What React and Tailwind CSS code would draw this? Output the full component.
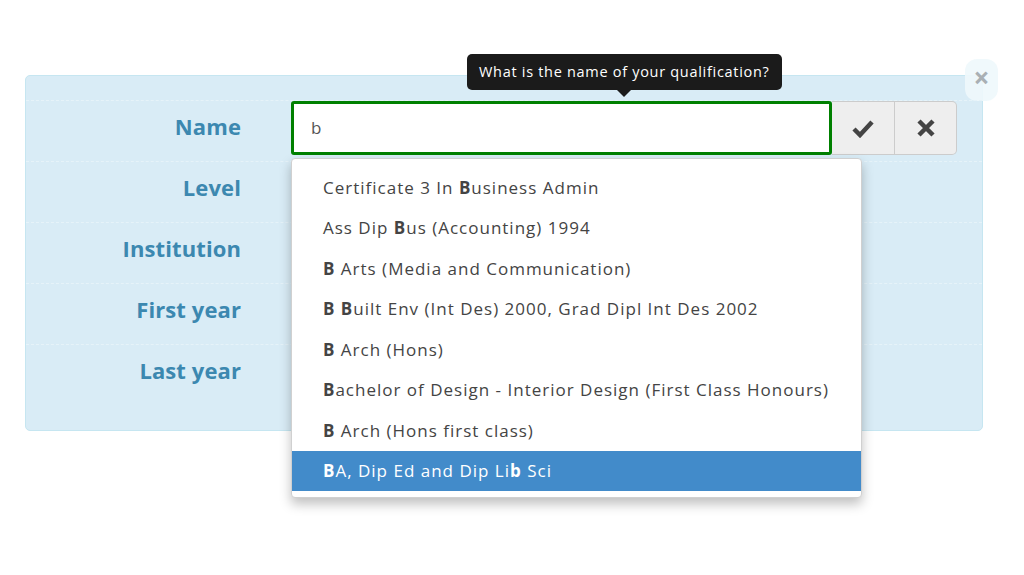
const font = { fontFamily: '"Open Sans", "Liberation Sans", sans-serif' };

const rows = ["Name", "Level", "Institution", "First year", "Last year"];

const options = [
  [["Certificate 3 In ", false], ["B", true], ["usiness Admin", false]],
  [["Ass Dip ", false], ["B", true], ["us (Accounting) 1994", false]],
  [["B", true], [" Arts (Media and Communication)", false]],
  [["B", true], [" ", false], ["B", true], ["uilt Env (Int Des) 2000, Grad Dipl Int Des 2002", false]],
  [["B", true], [" Arch (Hons)", false]],
  [["B", true], ["achelor of Design - Interior Design (First Class Honours)", false]],
  [["B", true], [" Arch (Hons first class)", false]],
  [["B", true], ["A, Dip Ed and Dip Li", false], ["b", true], [" Sci", false]],
];

function CheckIcon() {
  return (
    <svg width="24" height="20" viewBox="0 0 24 20">
      <path d="M3 11 L9 17 L21 4" fill="none" stroke="#444" strokeWidth="4.5" strokeLinejoin="miter" />
    </svg>
  );
}

function TimesIcon() {
  return (
    <svg width="20" height="20" viewBox="0 0 20 20">
      <path d="M3 3 L17 17 M17 3 L3 17" fill="none" stroke="#444" strokeWidth="4.5" />
    </svg>
  );
}

export default function App() {
  return (
    <div className="min-h-[575px] bg-white pt-[75px] px-[25px]" style={font}>
      <div className="relative w-[958px] rounded-[5px] border border-[#c6e6f1] bg-[#d9ecf6] pt-[24px] pb-[25px]">
        {/* close */}
        <div className="absolute -top-[17px] -right-[16px] flex h-[42px] w-[33px] items-center justify-center rounded-[12px] bg-[#eef8fc]/90 pb-[7px] text-[28px] font-bold leading-none text-[#a9b0b4]">
          ×
        </div>

        {rows.map((label, i) => (
          <div
            key={label}
            className="relative flex h-[61px] border-t border-dashed border-[#e6f3f9]"
          >
            <div className="w-[215px] pt-[9px] text-right text-[22px] font-bold tracking-[0.1px] text-[#3c88b0]">
              {label}
            </div>
            {i === 0 && (
              <div className="ml-[50px] flex h-[54px]">
                <div className="flex w-[541px] items-center rounded-[3px] border-[3px] border-[#008000] bg-white px-[17px] text-[17px] text-[#555]">
                  b
                </div>
                <div className="flex w-[63px] items-center justify-center border border-l-0 border-[#ccc] bg-[#eeeeee]">
                  <CheckIcon />
                </div>
                <div className="flex w-[62px] items-center justify-center rounded-r-[5px] border border-l-0 border-[#ccc] bg-[#eeeeee]">
                  <TimesIcon />
                </div>
              </div>
            )}
          </div>
        ))}

        {/* tooltip */}
        <div className="absolute left-[441px] -top-[22px] rounded-[5px] bg-[#1b1b1b] px-[12px] py-[7px] text-[14.5px] tracking-[0.7px] text-white">
          What is the name of your qualification?
          <span className="absolute left-[150px] top-full h-0 w-0 border-x-[7px] border-t-[7px] border-x-transparent border-t-[#1b1b1b]" />
        </div>

        {/* dropdown */}
        <div className="absolute left-[265px] top-[82px] w-[571px] overflow-hidden rounded-[4px] border border-[#d0d0d0] bg-white pt-[8px] pb-[6px] shadow-[0_6px_12px_rgba(0,0,0,0.25)]">
          {options.map((parts, i) => (
            <div
              key={i}
              className={`flex h-[40.5px] items-center pl-[31px] text-[17px] tracking-[1px] ${
                i === 7 ? "bg-[#428bca] text-white" : "text-[#444]"
              }`}
            >
              <span className="whitespace-pre">
                {parts.map(([t, b], j) => (
                  <span key={j} className={b ? "font-bold" : ""}>
                    {t}
                  </span>
                ))}
              </span>
            </div>
          ))}
        </div>
      </div>
    </div>
  );
}
